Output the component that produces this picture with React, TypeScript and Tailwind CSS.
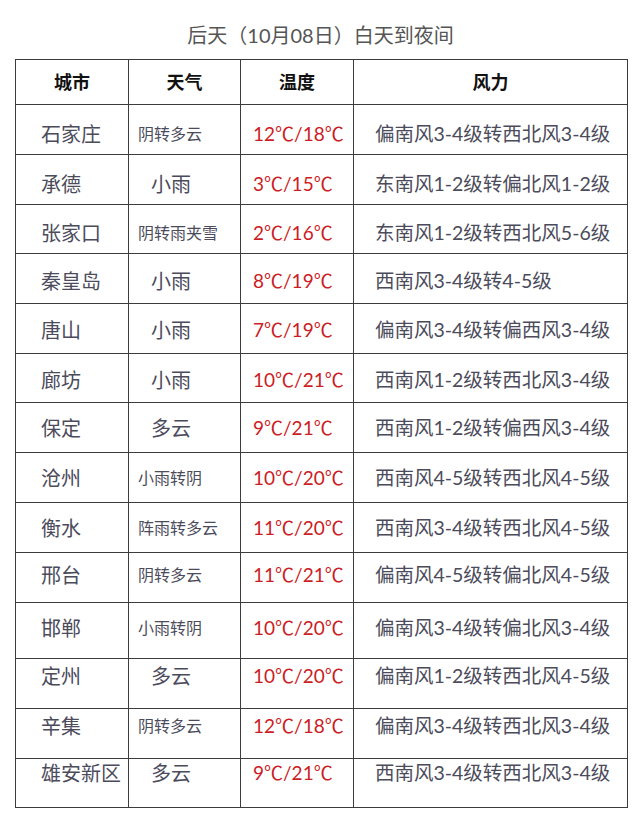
const rows = [
  { city: '石家庄', weather: '阴转多云', small: true, temp: '12℃/18℃', wind: '偏南风3-4级转西北风3-4级', h: 'h-[50px]', pt: 'pt-[15px]' },
  { city: '承德', weather: '小雨', small: false, temp: '3℃/15℃', wind: '东南风1-2级转偏北风1-2级', h: 'h-[50px]', pt: 'pt-[15px]' },
  { city: '张家口', weather: '阴转雨夹雪', small: true, temp: '2℃/16℃', wind: '东南风1-2级转西北风5-6级', h: 'h-[49px]', pt: 'pt-[14px]' },
  { city: '秦皇岛', weather: '小雨', small: false, temp: '8℃/19℃', wind: '西南风3-4级转4-5级', h: 'h-[50px]', pt: 'pt-[13px]' },
  { city: '唐山', weather: '小雨', small: false, temp: '7℃/19℃', wind: '偏南风3-4级转偏西风3-4级', h: 'h-[50px]', pt: 'pt-[12px]' },
  { city: '廊坊', weather: '小雨', small: false, temp: '10℃/21℃', wind: '西南风1-2级转西北风3-4级', h: 'h-[49px]', pt: 'pt-[12px]' },
  { city: '保定', weather: '多云', small: false, temp: '9℃/21℃', wind: '西南风1-2级转偏西风3-4级', h: 'h-[50px]', pt: 'pt-[11px]' },
  { city: '沧州', weather: '小雨转阴', small: true, temp: '10℃/20℃', wind: '西南风4-5级转西北风4-5级', h: 'h-[50px]', pt: 'pt-[11px]' },
  { city: '衡水', weather: '阵雨转多云', small: true, temp: '11℃/20℃', wind: '西南风3-4级转西北风4-5级', h: 'h-[50px]', pt: 'pt-[11px]' },
  { city: '邢台', weather: '阴转多云', small: true, temp: '11℃/21℃', wind: '偏南风4-5级转偏北风4-5级', h: 'h-[50px]', pt: 'pt-[8px]' },
  { city: '邯郸', weather: '小雨转阴', small: true, temp: '10℃/20℃', wind: '偏南风3-4级转偏北风3-4级', h: 'h-[56px]', pt: 'pt-[11px]' },
  { city: '定州', weather: '多云', small: false, temp: '10℃/20℃', wind: '偏南风1-2级转西北风4-5级', h: 'h-[50px]', pt: 'pt-[3px]' },
  { city: '辛集', weather: '阴转多云', small: true, temp: '12℃/18℃', wind: '偏南风3-4级转西北风3-4级', h: 'h-[50px]', pt: 'pt-[3px]' },
  { city: '雄安新区', weather: '多云', small: false, temp: '9℃/21℃', wind: '西南风3-4级转西北风3-4级', h: 'h-[49px]', pt: 'pt-[0px]' },
];

const cell = 'border-r border-b border-[#3c3c3c]';

export default function App() {
  return (
    <div className="min-h-[829px] w-[641px] bg-white font-['Lato','Noto_Sans_CJK_SC',sans-serif]">
      <h1 className="pt-[22px] pb-[11px] text-center text-[20px] leading-[26px] text-[#555555]">
        后天（10月08日）白天到夜间
      </h1>
      <div className="ml-[15px] w-[613px] border-l border-t border-[#3c3c3c]">
        <div className="flex h-[45px] text-[18px] font-bold leading-[44px] text-[#111111]">
          <div className={`w-[113px] text-center ${cell}`}>城市</div>
          <div className={`w-[112px] text-center ${cell}`}>天气</div>
          <div className={`w-[113px] text-center ${cell}`}>温度</div>
          <div className={`flex-1 text-center ${cell}`}>风力</div>
        </div>
        {rows.map((r) => (
          <div key={r.city} className={`flex ${r.h} leading-[28px] text-[#4b4b5b]`}>
            <div className={`w-[113px] pl-[25px] text-[20px] ${r.pt} ${cell}`}>{r.city}</div>
            <div
              className={`w-[112px] ${r.small ? 'pl-[9px] text-[16px]' : 'pl-[22px] text-[20px]'} ${r.pt} ${cell}`}
            >
              {r.weather}
            </div>
            <div className={`w-[113px] pl-[12px] text-[19px] text-[#cc1c24] ${r.pt} ${cell}`}>{r.temp}</div>
            <div className={`flex-1 pl-[21px] text-[19.5px] ${r.pt} ${cell}`}>{r.wind}</div>
          </div>
        ))}
      </div>
    </div>
  );
}
